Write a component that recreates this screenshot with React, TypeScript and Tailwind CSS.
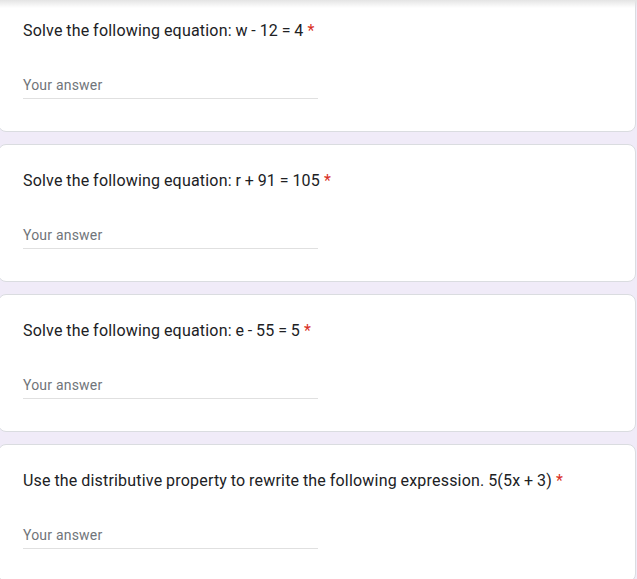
import React from 'react';

const questions = [
  'Solve the following equation: w - 12 = 4',
  'Solve the following equation: r + 91 = 105',
  'Solve the following equation: e - 55 = 5',
  'Use the distributive property to rewrite the following expression. 5(5x + 3)',
];

const QuestionCard: React.FC<{ title: string }> = ({ title }) => (
  <div className="ml-[-2px] w-[638px] h-[138px] mb-3 bg-white border border-[#dadce0] rounded-lg px-6 pt-6">
    <div className="h-6 leading-6 text-base text-[#202124] tracking-[0.2px] [word-spacing:-0.5px]">
      {title}
      <span className="text-[#d93025] ml-1">*</span>
    </div>
    <div className="mt-[30px] w-[295px] h-[26px] border-b border-[#e0e0e0]">
      <div className="leading-6 text-sm text-[#70757a] tracking-[0.2px]">Your answer</div>
    </div>
  </div>
);

export default function App() {
  return (
    <div className="relative min-h-screen overflow-hidden bg-[#f0ebf8] font-['Roboto',sans-serif]">
      <div className="mt-[-6px]">
        {questions.map((q) => (
          <QuestionCard key={q} title={q} />
        ))}
      </div>
      {/* header shadow */}
      <div className="absolute top-0 left-0 right-0 h-2 bg-gradient-to-b from-[#e4e4e4] to-transparent" />
    </div>
  );
}
